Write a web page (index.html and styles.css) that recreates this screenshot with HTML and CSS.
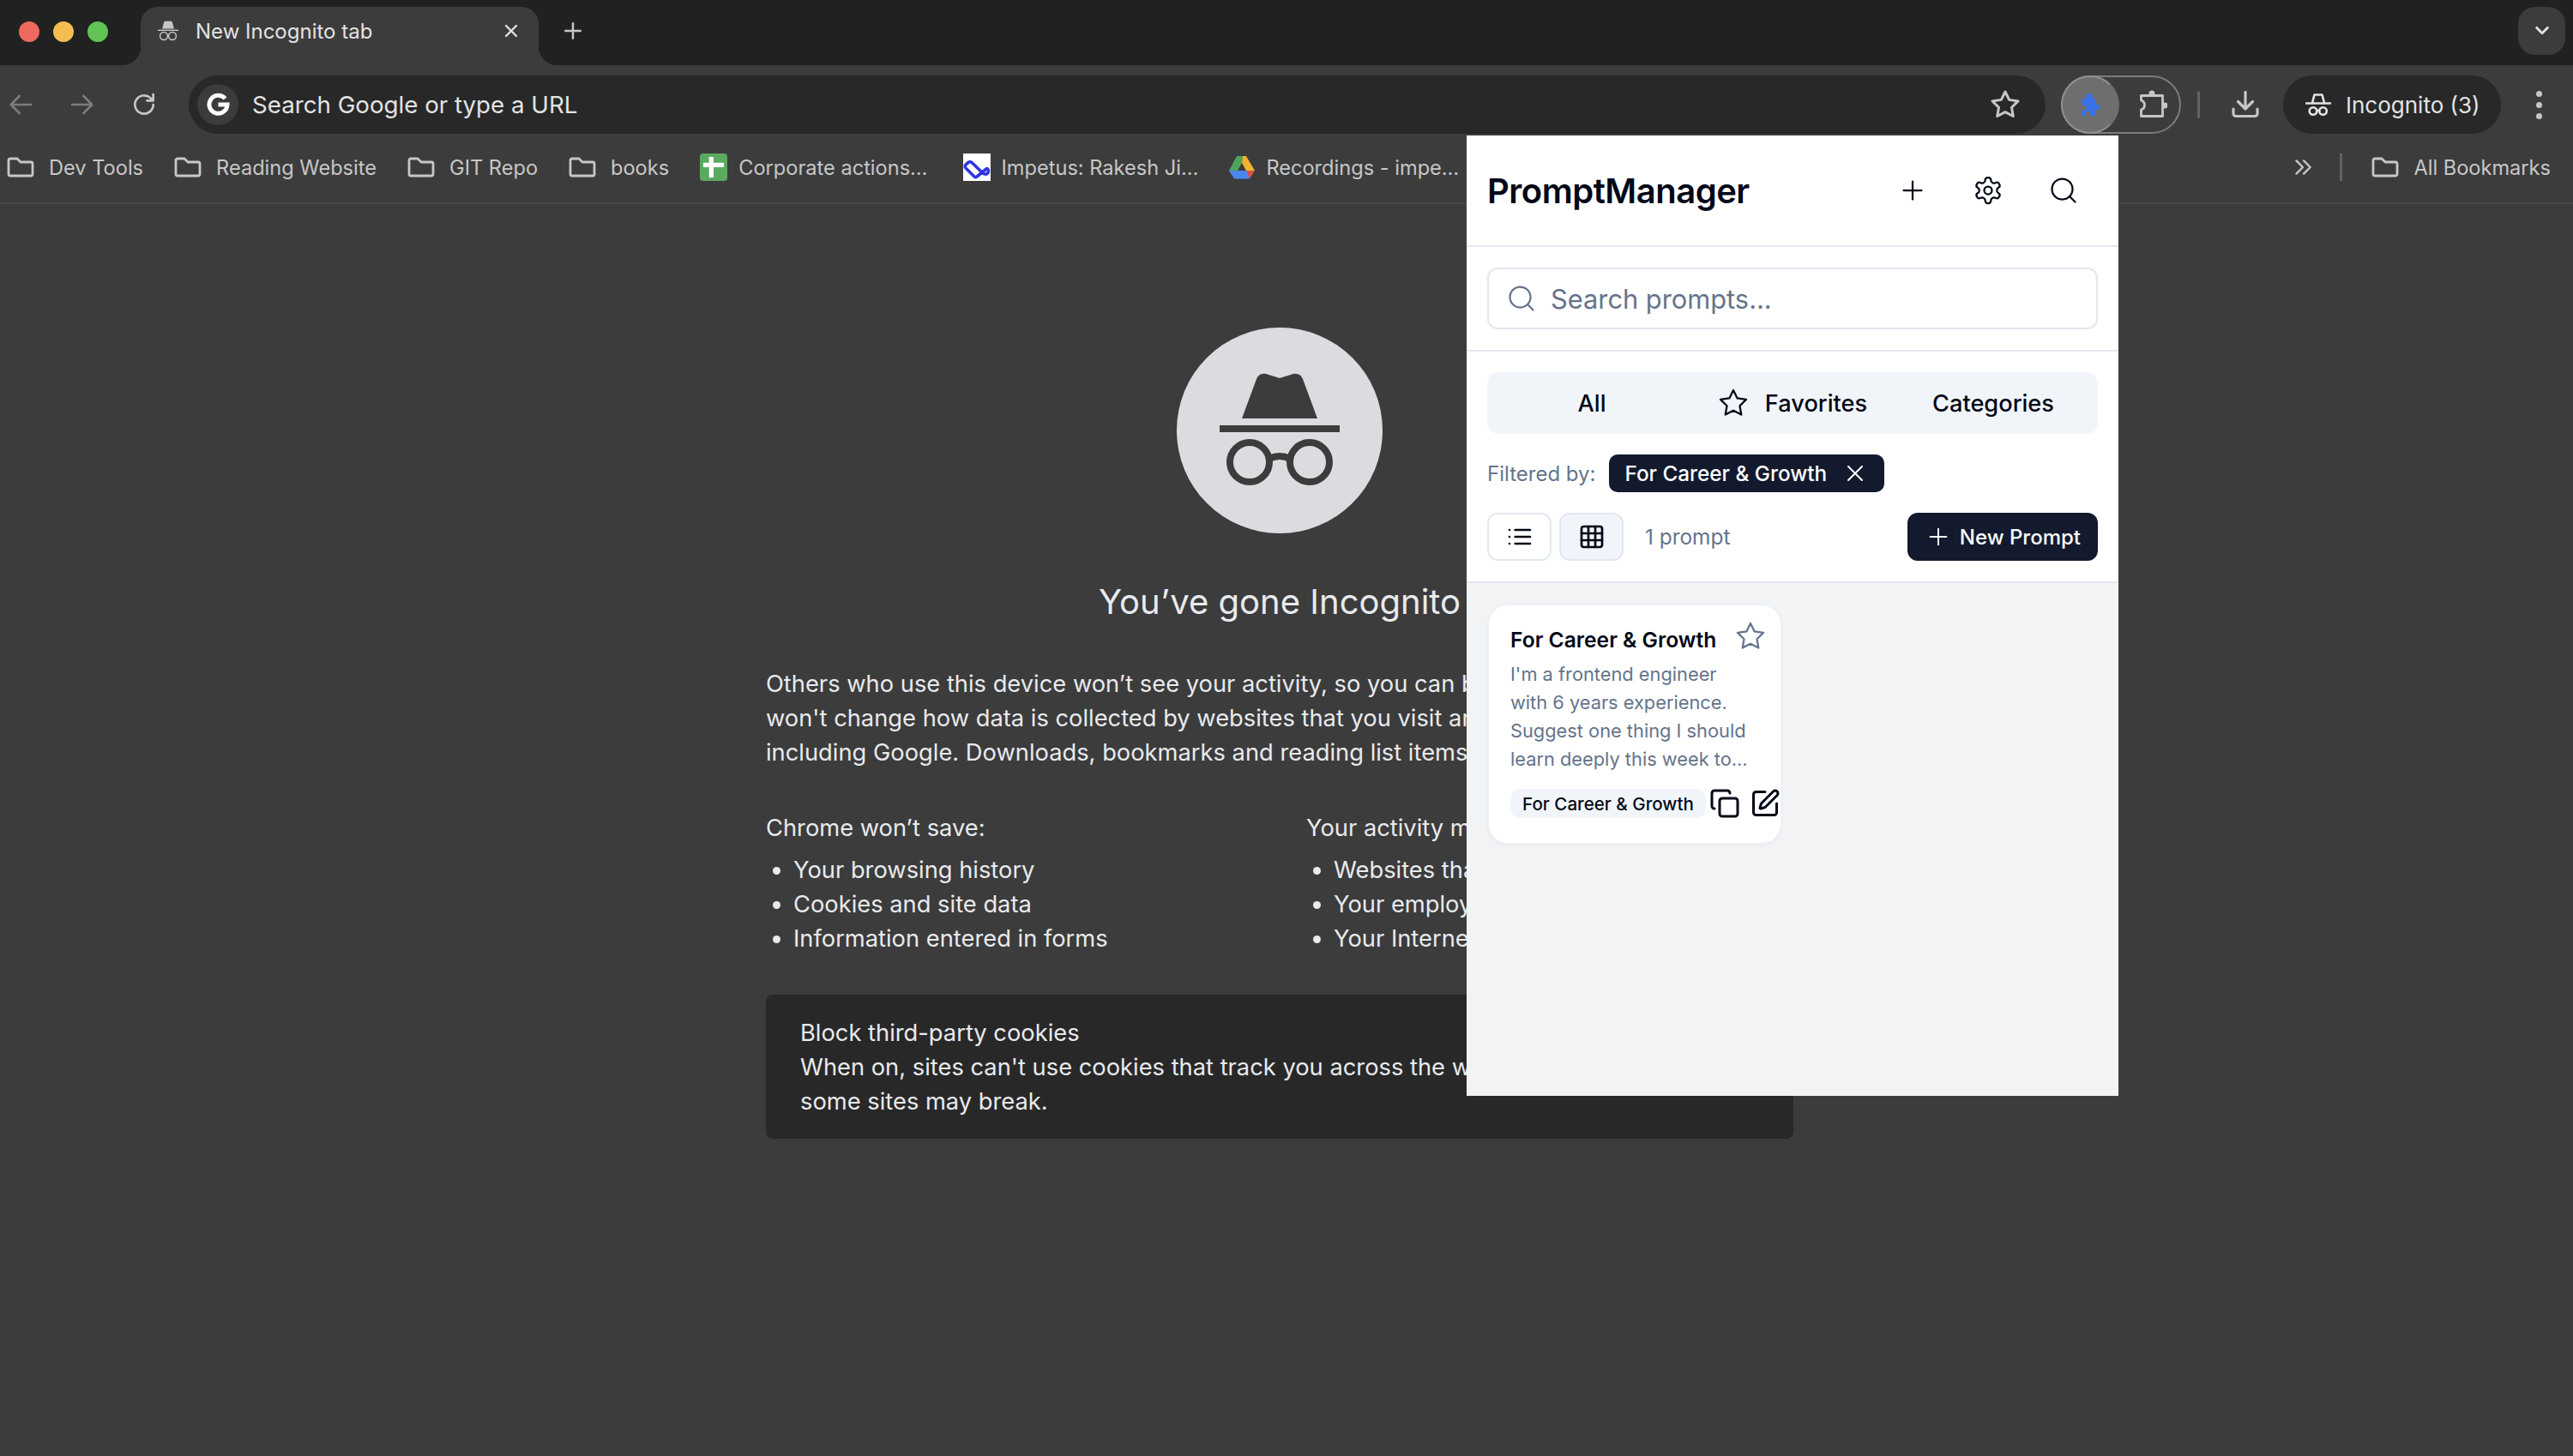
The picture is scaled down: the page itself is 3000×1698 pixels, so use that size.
FILE: index.html
```html
<!DOCTYPE html>
<html lang="en">
<head>
    <meta charset="UTF-8">
    <meta name="viewport" content="width=device-width, initial-scale=1.0">
    <title>New Incognito tab</title>
    <link rel="stylesheet" href="styles.css">
</head>
<body>
    <svg class="sprite" xmlns="http://www.w3.org/2000/svg">
        <symbol id="i-plus" viewBox="0 0 24 24"><path d="M5 12h14M12 5v14"/></symbol>
        <symbol id="i-x" viewBox="0 0 24 24"><path d="M18 6 6 18M6 6l12 12"/></symbol>
        <symbol id="i-gear" viewBox="0 0 24 24"><path d="M12.22 2h-.44a2 2 0 0 0-2 2v.18a2 2 0 0 1-1 1.73l-.43.25a2 2 0 0 1-2 0l-.15-.08a2 2 0 0 0-2.73.73l-.22.38a2 2 0 0 0 .73 2.73l.15.1a2 2 0 0 1 1 1.72v.51a2 2 0 0 1-1 1.74l-.15.09a2 2 0 0 0-.73 2.73l.22.38a2 2 0 0 0 2.73.73l.15-.08a2 2 0 0 1 2 0l.43.25a2 2 0 0 1 1 1.73V20a2 2 0 0 0 2 2h.44a2 2 0 0 0 2-2v-.18a2 2 0 0 1 1-1.73l.43-.25a2 2 0 0 1 2 0l.15.08a2 2 0 0 0 2.73-.73l.22-.39a2 2 0 0 0-.73-2.73l-.15-.08a2 2 0 0 1-1-1.74v-.5a2 2 0 0 1 1-1.74l.15-.09a2 2 0 0 0 .73-2.73l-.22-.38a2 2 0 0 0-2.73-.73l-.15.08a2 2 0 0 1-2 0l-.43-.25a2 2 0 0 1-1-1.73V4a2 2 0 0 0-2-2z"/><circle cx="12" cy="12" r="3"/></symbol>
        <symbol id="i-search" viewBox="0 0 24 24"><circle cx="11" cy="11" r="8"/><path d="m21 21-4.3-4.3"/></symbol>
        <symbol id="i-star" viewBox="0 0 24 24"><path d="M12 2l3.09 6.26L22 9.27l-5 4.87 1.18 6.88L12 17.77l-6.18 3.25L7 14.14 2 9.27l6.91-1.01z"/></symbol>
        <symbol id="i-list" viewBox="0 0 24 24"><path d="M8 6h13M8 12h13M8 18h13M3 6h.01M3 12h.01M3 18h.01"/></symbol>
        <symbol id="i-grid" viewBox="0 0 24 24"><rect x="3" y="3" width="18" height="18" rx="2"/><path d="M3 9h18M3 15h18M9 3v18M15 3v18"/></symbol>
        <symbol id="i-copy" viewBox="0 0 24 24"><rect x="8" y="8" width="14" height="14" rx="2"/><path d="M4 16c-1.1 0-2-.9-2-2V4c0-1.1.9-2 2-2h10c1.1 0 2 .9 2 2"/></symbol>
        <symbol id="i-pen" viewBox="0 0 24 24"><path d="M12 3H5a2 2 0 0 0-2 2v14a2 2 0 0 0 2 2h14a2 2 0 0 0 2-2v-7"/><path d="M18.375 2.625a1 1 0 0 1 3 3l-9.013 9.014a2 2 0 0 1-.853.505l-2.873.84a.5.5 0 0 1-.62-.62l.84-2.873a2 2 0 0 1 .506-.852z"/></symbol>
        <symbol id="i-folder" viewBox="0 0 32 24"><path d="M2 4a2 2 0 0 1 2-2h8l4 4h12a2 2 0 0 1 2 2v12a2 2 0 0 1-2 2H4a2 2 0 0 1-2-2z"/></symbol>
    </svg>

    <!-- Tab strip -->
    <div class="tabstrip">
        <div class="lights">
            <span class="light red"></span>
            <span class="light yellow"></span>
            <span class="light green"></span>
        </div>
        <div class="tab">
            <svg class="tab-icon" viewBox="0 0 24 24">
                <path class="solid" d="M5 9.500 7.200 2c.2-.8.8-1.200 1.500-1.200h6.600c.7 0 1.300.4 1.500 1.200L19 9.500z"/>
                <path class="solid" d="M0 10.600h24v1.400H0z"/>
                <circle cx="7" cy="18" r="4.400"/>
                <circle cx="17" cy="18" r="4.400"/>
                <path d="M11.300 17c.9-.5 1.500-.5 1.400 0"/>
            </svg>
            <span class="tab-title">New Incognito tab</span>
            <svg class="tab-close"><use href="#i-x"/></svg>
        </div>
        <svg class="new-tab"><use href="#i-plus"/></svg>
        <div class="tab-search">
            <svg viewBox="0 0 24 24"><path d="M5 8l7 7 7-7"/></svg>
        </div>
    </div>

    <!-- Toolbar -->
    <div class="toolbar">
        <span class="slot dim"><svg viewBox="0 0 24 24"><path d="M21 12H4M11 4.500 3.500 12l7.500 7.500"/></svg></span>
        <span class="slot dim next"><svg viewBox="0 0 24 24"><path d="M3 12h17M13 4.500l7.500 7.500-7.500 7.500"/></svg></span>
        <span class="slot next"><svg viewBox="0 0 24 24"><path d="M20 12a8 8 0 1 1-2.600-5.900L20 8.500M20 3v5.500h-5.500"/></svg></span>
        <div class="omnibox">
            <span class="g-badge">
                <svg viewBox="0 0 28 28"><path d="M22.500 7A10.500 10.500 0 1 0 25 14H14.500"/></svg>
            </span>
            <span class="omni-text">Search Google or type a URL</span>
            <svg class="omni-star"><use href="#i-star"/></svg>
        </div>
        <div class="ext-pill">
            <span class="ext-active">
                <svg viewBox="0 0 32 32"><path d="M10 9h3.500c.8 0 1-.6.800-1.300a3.800 3.800 0 1 1 7.200 0c-.2.700 0 1.300.8 1.300H25v6c0 .7.600 1 1.300.8a3.400 3.400 0 1 1 0 6.600c-.7-.2-1.300.1-1.300.8V29h-5c-.8 0-1-.6-.8-1.200a2.900 2.900 0 1 0-5.400 0c.2.600 0 1.200-.8 1.200H9v-5.500c0-.8.600-1 1.200-.8a3.300 3.300 0 1 0 0-6.400c-.6.200-1.200 0-1.200-.8z"/></svg>
            </span>
            <span class="ext-other">
                <svg viewBox="0 0 34 34">
                    <circle class="solid" cx="16" cy="4" r="3.500"/>
                    <circle class="solid" cx="31" cy="18" r="3.500"/>
                    <path d="M3.500 6.500h25v24h-25v-7.500c3-1 4-3.500 4-5.500s-1-4.500-4-5.500z"/>
                </svg>
            </span>
        </div>
        <span class="tool-divider"></span>
        <span class="slot download">
            <svg viewBox="0 0 32 32"><path d="M16 1.500v19M7.500 12.500l8.500 8.500 8.500-8.500M2 21v5.500a3 3 0 0 0 3 3h22a3 3 0 0 0 3-3V21"/></svg>
        </span>
        <div class="profile">
            <svg class="profile-icon" viewBox="0 0 30 28">
                <path d="M8 12 10.500 2.500h9L22 12"/>
                <path d="M1 12.500h28"/>
                <circle cx="9" cy="21.500" r="4.300"/>
                <circle cx="20.500" cy="21.500" r="4.300"/>
                <path d="M13.300 21h2.900"/>
            </svg>
            <span>Incognito (3)</span>
        </div>
        <span class="slot kebab"><i></i><i></i><i></i></span>
    </div>

    <!-- Bookmarks bar -->
    <div class="bookmarks">
        <a class="bm"><svg class="bm-folder"><use href="#i-folder"/></svg>Dev Tools</a>
        <a class="bm"><svg class="bm-folder"><use href="#i-folder"/></svg>Reading Website</a>
        <a class="bm"><svg class="bm-folder"><use href="#i-folder"/></svg>GIT Repo</a>
        <a class="bm"><svg class="bm-folder"><use href="#i-folder"/></svg>books</a>
        <a class="bm fav sheet">
            <svg class="bm-icon" viewBox="0 0 32 32"><rect width="32" height="32" rx="4" fill="#5aaa60"/><path d="M10.700 4H16v6.700h12V16H16v12h-5.300V16H4v-5.300h6.700z" fill="#fff"/></svg>
            Corporate actions…
        </a>
        <a class="bm fav">
            <svg class="bm-icon" viewBox="0 0 32 32"><rect width="32" height="32" fill="#fff"/><path d="M27 18 16 27c-1 1-2 1-3 0L3 17c-1-1-1-3 0-4l3-2.500c1-1 3-1 4 0L22 22c1.500 1.500 3 2.500 5 2 3-1 3-5 1.500-6-.5-.4-1-.4-1.500 0" fill="none" stroke="#2f37e0" stroke-width="3.600"/></svg>
            Impetus: Rakesh Ji…
        </a>
        <a class="bm fav">
            <svg class="bm-drive" viewBox="0 0 30 27"><path d="M9 0h7l-1 8-5 9H0z" fill="#4fa45c"/><path d="M16 0h4l10 17H20l-5-9z" fill="#f2b230"/><path d="M0 17h22l2 9.500H6z" fill="#4a86ee"/><path d="M20 17h10l-6 9.500z" fill="#d9553f"/></svg>
            Recordings - impe…
        </a>
        <div class="bm-right">
            <svg class="bm-more" viewBox="0 0 24 24"><path d="M5 5l7 7-7 7M13 5l7 7-7 7"/></svg>
            <span class="bm-divider"></span>
            <a class="bm"><svg class="bm-folder"><use href="#i-folder"/></svg>All Bookmarks</a>
        </div>
    </div>

    <!-- New tab page: text runs under the popup, so only what shows is written out -->
    <main class="ntp">
        <div class="spy-badge">
            <svg viewBox="0 0 240 240">
                <path d="M76 106 93 60c2-5 6-7 11-6l16 5 16-5c5-1 9 1 11 6l17 46z" fill="#3c3c3c"/>
                <rect x="50" y="114" width="140" height="8" fill="#3c3c3c"/>
                <g fill="none" stroke="#3c3c3c" stroke-width="8">
                    <circle cx="85" cy="157" r="23"/>
                    <circle cx="155" cy="157" r="23"/>
                    <path d="M108 153c8-4 16-4 24 0"/>
                </g>
            </svg>
        </div>
        <h1 class="ntp-title">You’ve gone Incognito</h1>
        <div class="ntp-content">
            <p class="intro">Others who use this device won’t see your activity, so you can b<br>won't change how data is collected by websites that you visit ar<br>including Google. Downloads, bookmarks and reading list items</p>
            <div class="ntp-cols">
                <div>
                    <div class="col-head">Chrome won’t save:</div>
                    <ul class="col-list">
                        <li>Your browsing history</li>
                        <li>Cookies and site data</li>
                        <li>Information entered in forms</li>
                    </ul>
                </div>
                <div>
                    <div class="col-head">Your activity m</div>
                    <ul class="col-list">
                        <li>Websites tha</li>
                        <li>Your employ</li>
                        <li>Your Interne</li>
                    </ul>
                </div>
            </div>
            <div class="cookie-box">
                <div>Block third-party cookies</div>
                <div>When on, sites can't use cookies that track you across the w<br>some sites may break.</div>
            </div>
        </div>
    </main>

    <!-- Extension popup -->
    <aside class="popup">
        <header class="pm-header">
            <div class="pm-logo">PromptManager</div>
            <div class="pm-actions">
                <svg class="lu"><use href="#i-plus"/></svg>
                <svg class="lu"><use href="#i-gear"/></svg>
                <svg class="lu"><use href="#i-search"/></svg>
            </div>
        </header>
        <section class="pm-search">
            <div class="search-input">
                <svg class="lu muted"><use href="#i-search"/></svg>
                <span>Search prompts...</span>
            </div>
        </section>
        <section class="pm-controls">
            <div class="pm-tabs">
                <div class="pm-tab">All</div>
                <div class="pm-tab"><svg class="lu"><use href="#i-star"/></svg>Favorites</div>
                <div class="pm-tab">Categories</div>
            </div>
            <div class="filter-row">
                <span class="filter-label">Filtered by:</span>
                <span class="filter-chip">For Career &amp; Growth<svg class="lu"><use href="#i-x"/></svg></span>
            </div>
            <div class="view-row">
                <span class="view-btn"><svg class="lu"><use href="#i-list"/></svg></span>
                <span class="view-btn active"><svg class="lu"><use href="#i-grid"/></svg></span>
                <span class="count">1 prompt</span>
                <span class="new-prompt"><svg class="lu"><use href="#i-plus"/></svg>New Prompt</span>
            </div>
        </section>
        <section class="pm-body">
            <article class="card">
                <div class="card-head">
                    <div class="card-title">For Career &amp; Growth</div>
                    <svg class="lu muted"><use href="#i-star"/></svg>
                </div>
                <p class="card-text">I'm a frontend engineer<br>with 6 years experience.<br>Suggest one thing I should<br>learn deeply this week to...</p>
                <div class="card-foot">
                    <span class="card-tag">For Career &amp; Growth</span>
                    <svg class="lu"><use href="#i-copy"/></svg>
                    <svg class="lu"><use href="#i-pen"/></svg>
                </div>
            </article>
        </section>
    </aside>
</body>
</html>
```

FILE: styles.css
```css
* {
    box-sizing: border-box;
}

html, body {
    margin: 0;
    padding: 0;
}

body {
    position: relative;
    width: 3000px;
    height: 1698px;
    overflow: hidden;
    background-color: #3c3c3c;
    font-family: Inter, "Noto Sans", sans-serif;
    color: #e3e3e3;
}

svg {
    display: block;
    flex: none;
    fill: none;
    stroke: currentColor;
    stroke-linecap: round;
    stroke-linejoin: round;
}

.sprite {
    display: none;
}

.solid {
    fill: currentColor;
    stroke: none;
}

/* Tab strip */
.tabstrip {
    display: flex;
    align-items: flex-start;
    height: 76px;
    background-color: #202221;
}

.lights {
    display: flex;
    gap: 16px;
    padding: 25px 0 0 22px;
}

.light {
    width: 24px;
    height: 24px;
    border-radius: 50%;
}

.red { background-color: #ee6a5f; }
.yellow { background-color: #f5bd4f; }
.green { background-color: #61c454; }

.tab {
    position: relative;
    display: flex;
    align-items: center;
    width: 464px;
    height: 68px;
    margin: 8px 0 0 38px;
    padding: 0 20px 12px 20px;
    background-color: #3c3c3c;
    border-radius: 20px 20px 0 0;
}

.tab::before,
.tab::after {
    content: "";
    position: absolute;
    bottom: 0;
    width: 22px;
    height: 22px;
}

.tab::before {
    left: -22px;
    background: radial-gradient(circle at 0 0, transparent 22px, #3c3c3c 22.500px);
}

.tab::after {
    right: -22px;
    background: radial-gradient(circle at 100% 0, transparent 22px, #3c3c3c 22.500px);
}

.tab-icon {
    width: 24px;
    height: 24px;
    color: #c7c7c7;
    stroke-width: 1.500;
}

.tab-title {
    flex: 1;
    margin-left: 20px;
    font-size: 24px;
    color: #e3e3e3;
}

.tab-close {
    width: 24px;
    height: 24px;
    stroke-width: 2.400;
}

.new-tab {
    width: 30px;
    height: 30px;
    margin: 21px 0 0 25px;
    color: #c7c7c7;
    stroke-width: 2;
}

.tab-search {
    display: flex;
    align-items: center;
    justify-content: center;
    width: 55px;
    height: 56px;
    margin: 8px 9px 0 auto;
    background-color: #3c3c3c;
    border-radius: 20px;
}

.tab-search svg {
    width: 22px;
    height: 22px;
    stroke-width: 3;
}

/* Toolbar */
.toolbar {
    display: flex;
    align-items: center;
    height: 80px;
    padding: 12px 16px 0 0;
    background-color: #3c3c3c;
    border-top-right-radius: 16px;
}

.slot {
    display: flex;
    align-items: center;
    justify-content: center;
    width: 48px;
    height: 48px;
    color: #c7c7c7;
    flex: none;
}

.slot svg {
    width: 32px;
    height: 32px;
    stroke-width: 2;
}

.slot.dim {
    color: #7c7c7c;
}

.slot.next {
    margin-left: 24px;
}

.omnibox {
    display: flex;
    align-items: center;
    flex: 1;
    height: 68px;
    margin-left: 28px;
    padding: 0 29px 0 10px;
    background-color: #282828;
    border-radius: 34px;
}

.g-badge {
    display: flex;
    align-items: center;
    justify-content: center;
    width: 48px;
    height: 48px;
    background-color: #3c3c3c;
    border-radius: 50%;
    color: #fff;
}

.g-badge svg {
    width: 28px;
    height: 28px;
    stroke-width: 5;
    stroke-linecap: butt;
    stroke-linejoin: miter;
}

.omni-text {
    flex: 1;
    margin-left: 16px;
    font-size: 27.700px;
}

.omni-star {
    width: 36px;
    height: 36px;
    color: #c7c7c7;
    stroke-width: 2;
}

.ext-pill {
    display: flex;
    align-items: center;
    width: 140px;
    height: 68px;
    margin-left: 18px;
    border: 2px solid #7c7c7c;
    border-radius: 34px;
}

.ext-active {
    display: flex;
    align-items: center;
    justify-content: center;
    width: 68px;
    height: 68px;
    margin-left: -2px;
    padding-right: 6px;
    background-color: #6e6e6e;
    border: 2px solid #8f8f8f;
    border-right-color: #6e6e6e;
    border-radius: 50%;
}

.ext-active svg {
    width: 32px;
    height: 32px;
    fill: #3a72e6;
    stroke: none;
}

.ext-other {
    display: flex;
    justify-content: center;
    flex: 1;
    padding-left: 7px;
    color: #c7c7c7;
}

.ext-other svg {
    width: 34px;
    height: 34px;
    stroke-width: 2.800;
}

.tool-divider {
    flex: none;
    width: 3px;
    height: 32px;
    margin-left: 19px;
    background-color: #636363;
    border-radius: 2px;
}

.slot.download {
    margin-left: 29px;
}

.slot.download svg {
    stroke-width: 3.200;
}

.profile {
    display: flex;
    align-items: center;
    flex: none;
    width: 254px;
    height: 68px;
    margin-left: 20px;
    padding-left: 26px;
    background-color: #282828;
    border-radius: 34px;
    font-size: 26px;
}

.profile-icon {
    width: 30px;
    height: 28px;
    margin-right: 17px;
    stroke-width: 2.600;
}

.slot.kebab {
    flex-direction: column;
    gap: 6px;
    margin-left: 20px;
}

.kebab i {
    width: 7px;
    height: 7px;
    background-color: #c7c7c7;
    border-radius: 50%;
}

/* Bookmarks bar */
.bookmarks {
    display: flex;
    align-items: center;
    gap: 36px;
    height: 82px;
    padding: 0 26px 2px 8px;
    background-color: #3c3c3c;
    border-bottom: 2px solid #474747;
    font-size: 23.600px;
    color: #c7c7c7;
}

.bm {
    display: flex;
    align-items: center;
    gap: 17px;
    white-space: nowrap;
}

.bm.fav {
    gap: 13px;
}

.bm.sheet {
    margin-right: 5px;
}

.bm-folder {
    width: 32px;
    height: 24px;
    stroke-width: 2.800;
}

.bm-icon {
    width: 32px;
    height: 32px;
    stroke: none;
}

.bm-drive {
    width: 30px;
    height: 27px;
    stroke: none;
}

.bm-right {
    display: flex;
    align-items: center;
    margin-left: auto;
}

.bm-more {
    width: 26px;
    height: 26px;
    stroke-width: 2.200;
}

.bm-divider {
    width: 3px;
    height: 32px;
    margin: 0 34px 0 30px;
    background-color: #636363;
}

/* New tab page */
.ntp {
    display: flex;
    flex-direction: column;
    align-items: center;
    padding: 144px 16px 0 0;
}

.spy-badge {
    width: 240px;
    height: 240px;
    background-color: #dbdce0;
    border-radius: 50%;
}

.spy-badge svg {
    width: 240px;
    height: 240px;
    stroke: none;
}

.ntp-title {
    margin: 56px 0 0;
    font-size: 40px;
    line-height: 48px;
    font-weight: 400;
    color: #e8eaed;
}

.ntp-content {
    width: 1198px;
    margin-top: 52px;
    font-size: 27.300px;
    line-height: 40px;
    color: #e8eaed;
}

.intro {
    margin: 0;
    white-space: nowrap;
}

.ntp-cols {
    display: grid;
    grid-template-columns: 630px 1fr;
    margin-top: 48px;
    white-space: nowrap;
}

.col-list {
    margin: 9px 0 0;
    padding-left: 32px;
}

.cookie-box {
    margin-top: 45px;
    padding: 25px 40px 23px;
    background-color: #282828;
    border-radius: 8px;
    white-space: nowrap;
}

/* Popup */
.popup {
    position: absolute;
    left: 1710px;
    top: 158px;
    display: flex;
    flex-direction: column;
    width: 760px;
    height: 1120px;
    background-color: #fff;
    color: #020817;
}

.lu {
    width: 36px;
    height: 36px;
    stroke-width: 1.500;
}

.muted {
    color: #64748b;
}

.pm-header {
    display: flex;
    align-items: center;
    justify-content: space-between;
    height: 130px;
    padding: 0 46px 0 24px;
    border-bottom: 2px solid #e2e8f0;
}

.pm-logo {
    font-size: 40px;
    font-weight: 600;
    letter-spacing: -0.500px;
}

.pm-actions {
    display: flex;
    gap: 52px;
}

.pm-search {
    padding: 24px;
    border-bottom: 2px solid #e2e8f0;
}

.search-input {
    display: flex;
    align-items: center;
    gap: 16px;
    height: 72px;
    padding-left: 20px;
    border: 2px solid #e2e8f0;
    border-radius: 12px;
    font-size: 30.800px;
    color: #64748b;
}

.pm-controls {
    display: flex;
    flex-direction: column;
    gap: 24px;
    padding: 24px;
    border-bottom: 2px solid #e2e8f0;
}

.pm-tabs {
    display: grid;
    grid-template-columns: repeat(3, 1fr);
    height: 72px;
    padding: 0 5px;
    background-color: #f1f5f9;
    border-radius: 14px;
}

.pm-tab {
    display: flex;
    align-items: center;
    justify-content: center;
    gap: 19px;
    font-size: 27.200px;
    font-weight: 500;
}

.filter-row {
    display: flex;
    align-items: center;
    gap: 16px;
    height: 44px;
}

.filter-label {
    font-size: 24px;
    color: #64748b;
}

.filter-chip {
    display: flex;
    align-items: center;
    gap: 17px;
    height: 44px;
    padding: 0 18px;
    background-color: #131a2e;
    border-radius: 10px;
    font-size: 24.300px;
    font-weight: 500;
    color: #fff;
}

.filter-chip .lu {
    width: 32px;
    height: 32px;
}

.view-row {
    display: flex;
    align-items: center;
    height: 56px;
}

.view-btn {
    display: flex;
    align-items: center;
    justify-content: center;
    width: 75px;
    height: 56px;
    margin-right: 9px;
    border: 2px solid #e2e8f0;
    border-radius: 12px;
}

.view-btn .lu {
    width: 32px;
    height: 32px;
    stroke-width: 2;
}

.view-btn.active {
    background-color: #f1f5f9;
}

.count {
    margin-left: 16px;
    font-size: 24.400px;
    color: #64748b;
}

.new-prompt {
    display: flex;
    align-items: center;
    gap: 9px;
    height: 56px;
    margin-left: auto;
    padding: 0 20px;
    background-color: #131a2e;
    border-radius: 12px;
    font-size: 24px;
    font-weight: 500;
    color: #fff;
}

.new-prompt .lu {
    width: 32px;
    height: 32px;
}

.pm-body {
    flex: 1;
    padding: 24px;
    background-color: #f1f3f5;
}

.card {
    width: 344px;
    height: 281px;
    padding: 18px 17px 0 25px;
    background-color: #fff;
    border: 2px solid #eef1f5;
    border-radius: 24px;
    box-shadow: 0 1px 2px rgba(15, 23, 42, 0.05);
}

.card-head {
    display: flex;
    justify-content: space-between;
}

.card-title {
    margin-top: 3px;
    font-size: 24.600px;
    line-height: 38px;
    font-weight: 600;
}

.card-text {
    margin: 5px 0 0;
    font-size: 21.800px;
    line-height: 33px;
    color: #64748b;
    white-space: nowrap;
}

.card-foot {
    display: flex;
    align-items: center;
    margin-top: 17px;
}

.card-foot .lu {
    margin-left: 4px;
    stroke-width: 2;
}

.card-foot .lu:last-child {
    margin-left: 11px;
}

.card-tag {
    display: flex;
    align-items: center;
    flex: none;
    height: 34px;
    padding: 0 14px;
    background-color: #f1f5f9;
    border-radius: 12px;
    font-size: 20.600px;
    font-weight: 500;
    white-space: nowrap;
}
```
